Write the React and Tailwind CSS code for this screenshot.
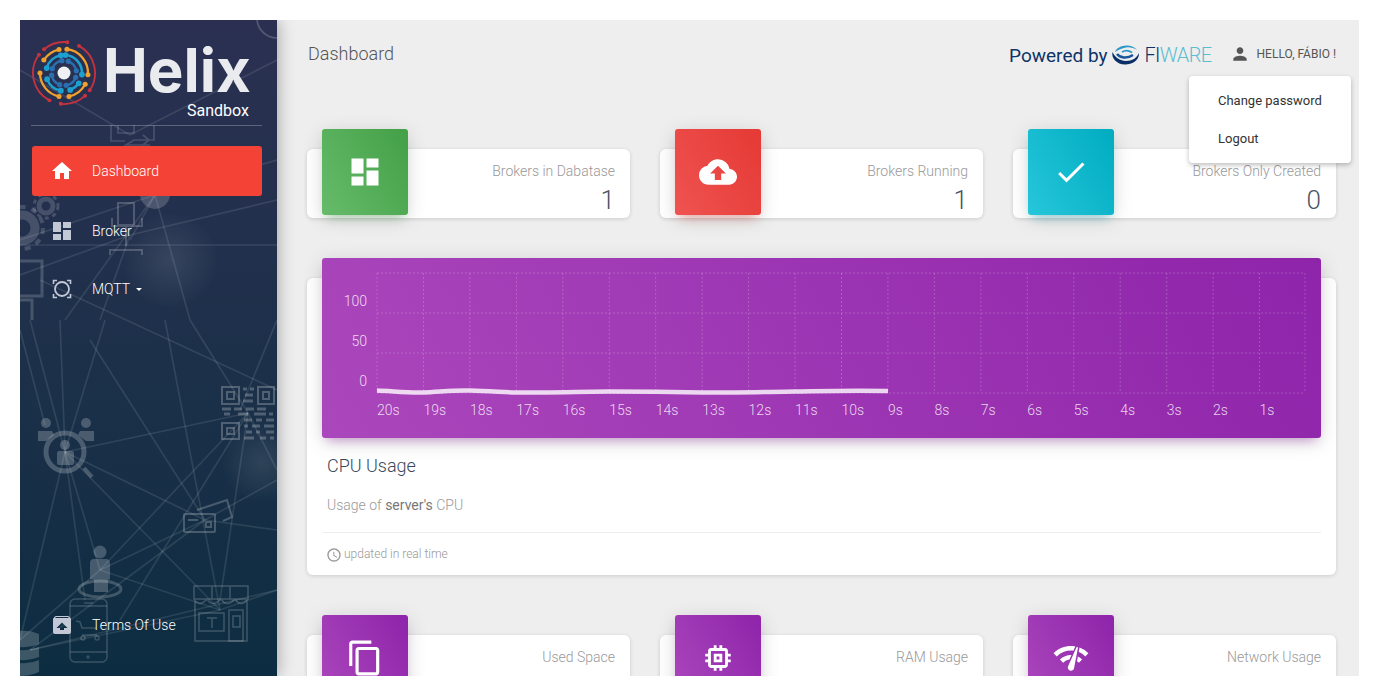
import React from "react";
import {
  MdHome,
  MdDashboard,
  MdCloudUpload,
  MdCheck,
  MdPerson,
  MdContentCopy,
  MdMemory,
  MdNetworkCheck,
  MdAccessTime,
  MdUnarchive,
} from "react-icons/md";

const topStats = [
  { title: "Brokers in Dabatase", value: "1", Icon: MdDashboard, size: 36, color: "bg-[linear-gradient(60deg,#66bb6a,#43a047)] shadow-[0_4px_20px_rgba(0,0,0,.14),0_7px_10px_-5px_rgba(76,175,80,.4)]" },
  { title: "Brokers Running", value: "1", Icon: MdCloudUpload, size: 38, color: "bg-[linear-gradient(60deg,#ef5350,#e53935)] shadow-[0_4px_20px_rgba(0,0,0,.14),0_7px_10px_-5px_rgba(244,67,54,.4)]" },
  { title: "Brokers Only Created", value: "0", Icon: MdCheck, size: 36, color: "bg-[linear-gradient(60deg,#26c6da,#00acc1)] shadow-[0_4px_20px_rgba(0,0,0,.14),0_7px_10px_-5px_rgba(0,172,193,.4)]" },
];

const purple = "bg-[linear-gradient(60deg,#ab47bc,#8e24aa)] shadow-[0_4px_20px_rgba(0,0,0,.14),0_7px_10px_-5px_rgba(156,39,176,.4)]";

const bottomStats = [
  { title: "Used Space", value: "", Icon: MdContentCopy, size: 38, color: purple },
  { title: "RAM Usage", value: "", Icon: MdMemory, size: 34, color: purple },
  { title: "Network Usage", value: "", Icon: MdNetworkCheck, size: 38, color: purple },
];

const seconds = ["20s", "19s", "18s", "17s", "16s", "15s", "14s", "13s", "12s", "11s", "10s", "9s", "8s", "7s", "6s", "5s", "4s", "3s", "2s", "1s"];

function StatCard({ title, value, Icon, size, color }) {
  return (
    <div className="mt-5 flex h-[69px] justify-between rounded-md bg-white shadow-[0_1px_4px_rgba(0,0,0,.14)]">
      <div className={`-mt-5 ml-[15px] flex h-[86px] w-[86px] shrink-0 items-center justify-center rounded-[3px] text-white ${color}`}>
        <Icon size={size} />
      </div>
      <div className="pr-[15px] pt-[12px] text-right">
        <p className="text-[14px] leading-[21px] font-light text-[#999]">{title}</p>
        <p className="mt-[3px] text-[26px] leading-[31px] font-light text-[#4a5463]">{value}</p>
      </div>
    </div>
  );
}

function CpuChart() {
  const xs = seconds.map((_, i) => 55 + i * 46.45);
  return (
    <svg viewBox="0 0 999 180" className="block h-[180px] w-[999px]">
      {[15, 55, 95, 135].map((y) => (
        <line key={y} x1="55" x2="983" y1={y} y2={y} stroke="rgba(255,255,255,.2)" strokeDasharray="2 2" />
      ))}
      {xs.concat(983).map((x) => (
        <line key={x} x1={x} x2={x} y1="15" y2="135" stroke="rgba(255,255,255,.2)" strokeDasharray="2 2" />
      ))}
      {[["100", 48], ["50", 88], ["0", 128]].map(([t, y]) => (
        <text key={t} x="45" y={y} textAnchor="end" fontSize="14" fontWeight="300" fill="rgba(255,255,255,.8)">{t}</text>
      ))}
      {seconds.map((s, i) => (
        <text key={s} x={xs[i]} y="157" fontSize="14" fontWeight="300" fill="rgba(255,255,255,.8)">{s}</text>
      ))}
      <path
        d="M55 132.5C70 133 85 135 101 134.5S130 132 148 132.5 180 134 194 134.5 270 133.5 287 133.5 360 134 380 134.5 440 134 473 133.5 520 132.5 566 133 566 133"
        fill="none"
        stroke="rgba(255,255,255,.8)"
        strokeWidth="4.5"
      />
    </svg>
  );
}

function SidebarArt() {
  const hub = [
    [65, 452, 30, 320], [65, 452, 60, 320], [65, 452, 105, 320], [65, 452, 248, 413], [65, 452, 205, 520],
    [65, 452, 100, 570], [65, 452, 220, 610], [65, 452, 20, 640], [65, 452, 85, 600], [248, 413, 100, 570],
    [248, 413, 120, 620], [248, 413, 220, 600], [248, 413, 190, 320], [248, 413, 277, 470], [205, 520, 100, 570],
    [205, 520, 277, 530], [205, 520, 277, 480], [205, 520, 30, 650], [100, 570, 220, 610], [100, 570, 20, 640],
    [220, 610, 277, 590], [30, 650, 220, 610], [30, 650, 277, 590], [220, 610, 165, 320], [277, 320, 240, 410],
    [155, 195, 20, 240], [155, 195, 277, 160], [155, 195, 130, 240], [155, 195, 65, 320],
    [130, 235, 20, 275], [130, 235, 277, 200], [130, 235, 100, 320], [155, 195, 190, 320],
    [20, 245, 277, 245], [40, 280, 277, 390], [130, 135, 20, 70], [130, 135, 277, 60],
    [20, 330, 45, 425], [205, 520, 90, 340],
  ];
  return (
    <svg viewBox="20 20 257 656" className="absolute inset-0 h-full w-full blur-[0.4px]" fill="none" stroke="rgba(255,255,255,.1)" strokeWidth="1.7">
      <defs>
        <radialGradient id="glow">
          <stop offset="0" stopColor="rgba(255,255,255,.1)" />
          <stop offset="1" stopColor="rgba(255,255,255,0)" />
        </radialGradient>
      </defs>
      <circle cx="170" cy="260" r="50" fill="url(#glow)" stroke="none" />
      <circle cx="262" cy="462" r="42" fill="url(#glow)" stroke="none" />
      {hub.map(([a, b, c, d], i) => (
        <line key={i} x1={a} y1={b} x2={c} y2={d} />
      ))}
      <circle cx="277" cy="18" r="20" stroke="rgba(255,255,255,.2)" />
      {/* flow chart */}
      <g stroke="rgba(255,255,255,.16)">
        <path d="M111 125v16h14M154 125v15h-20l-8 5h24M118 125v8h16v-8M143 135l6 5-6 5" />
      </g>
      {/* gears */}
      <g stroke="rgba(255,255,255,.16)">
        <circle cx="46" cy="206" r="7" strokeWidth="5" />
        <circle cx="46" cy="206" r="12" strokeDasharray="4 4" strokeWidth="3" />
        <circle cx="22" cy="228" r="13" strokeWidth="9" />
        <circle cx="22" cy="228" r="21" strokeDasharray="6 6" strokeWidth="4" />
      </g>
      <circle cx="155" cy="194" r="15" fill="rgba(255,255,255,.18)" stroke="none" />
      {/* chair */}
      <g stroke="rgba(255,255,255,.2)" strokeWidth="2">
        <path d="M118 203h16v22h-16zM112 218v8h30v-8M126 226v20M110 255v-5h32v5" />
      </g>
      {/* monitor */}
      <g stroke="rgba(255,255,255,.18)" strokeWidth="3">
        <path d="M20 261h22v35H20M20 300h12v20" />
      </g>
      {/* qr */}
      <g stroke="rgba(255,255,255,.24)">
        <path d="M222 387h17v17h-17zM227 392h7v7h-7zM258 387h16v17h-16zM263 392h6v7h-6zM222 423h17v16h-17zM227 428h7v6h-7z" strokeWidth="2" />
        <path d="M243 389h4m3 0h4M245 395h8M243 401h10M222 409h9m3 0h8m4 0h8m3 0h9M224 414h6m8 0h10m6 0h12m3 0h4M244 420h8m4 0h6m4 0h8M244 426h4m4 0h8m4 0h10M246 432h6m4 0h4m6 0h8M244 438h10m6 0h6m4 0h4" strokeWidth="3" />
      </g>
      {/* magnifier and people */}
      <g stroke="rgba(255,255,255,.22)">
        <circle cx="65" cy="452" r="19" strokeWidth="5" />
        <path d="M84 468l8 9" strokeWidth="4" />
        <g fill="rgba(255,255,255,.22)" stroke="none">
          <circle cx="65" cy="445" r="5" />
          <rect x="57" y="451" width="17" height="14" rx="2" />
          <circle cx="46" cy="423" r="5" />
          <path d="M38 431h14l2 4-8 6h-8z" />
          <circle cx="86" cy="423" r="5" />
          <path d="M80 431h14v10h-8l-8-6z" />
        </g>
      </g>
      {/* cards */}
      <g stroke="rgba(255,255,255,.22)" strokeWidth="2">
        <path d="M197 510l30-10 5 17-9 4" />
        <rect x="184" y="514" width="31" height="18" rx="1" />
        <path d="M188 520h10M206 522h5v5h-5z" />
      </g>
      {/* person on ring */}
      <g fill="rgba(255,255,255,.22)" stroke="none">
        <circle cx="100" cy="552" r="6.5" />
        <path d="M90 563q0-4 4-4h12q4 0 4 4v16l-2 1v12H94v-12l-4-1z" />
      </g>
      <ellipse cx="100" cy="589" rx="21" ry="8" stroke="rgba(255,255,255,.2)" strokeWidth="3" />
      {/* phone */}
      <g stroke="rgba(255,255,255,.18)" strokeWidth="1.5">
        <rect x="70" y="599" width="37" height="63" rx="5" />
        <path d="M70 606h37M70 652h37M84 603h9M96 628h-14l-2-6-4-1M82 635h15" />
        <circle cx="83" cy="638" r="2" />
        <circle cx="97" cy="638" r="2" />
        <circle cx="88" cy="657" r="1" />
      </g>
      {/* store */}
      <g stroke="rgba(255,255,255,.2)" strokeWidth="1.5">
        <path d="M194 586h54v13H194zM195 600v41h52v-41M194 599q5 9 13 0 5 9 14 0 6 9 14 0 6 9 13 0M212 586v13M230 586v13" />
        <rect x="199" y="613" width="25" height="18" />
        <rect x="229" y="610" width="14" height="31" />
        <path d="M207 618h10M212 618v10M233 616h7v11h-7z" />
      </g>
      {/* db */}
      <g fill="rgba(255,255,255,.2)" stroke="none">
        <path d="M20 631q10-1 19 3v10q-9 4-19 3zM20 650q10 1 19-3v10q-9 4-19 3zM20 663q10 1 19-3v12q-9 4-19 4z" />
      </g>
    </svg>
  );
}

function Arc({ r, from, to, color, width }) {
  const pt = (deg) => {
    const a = (deg * Math.PI) / 180;
    return [33 + r * Math.sin(a), 33 - r * Math.cos(a)];
  };
  const [x1, y1] = pt(from);
  const [x2, y2] = pt(to);
  const large = to - from > 180 ? 1 : 0;
  return (
    <g>
      <path d={`M${x1} ${y1}A${r} ${r} 0 ${large} 1 ${x2} ${y2}`} stroke={color} strokeWidth={width} fill="none" />
      <circle cx={x1} cy={y1} r={width * 1.1} fill={color} />
      <circle cx={x2} cy={y2} r={width * 1.1} fill={color} />
    </g>
  );
}

const helixArcs = [
  [31, -40, 6, "#c8323f", 1.8], [31, 29, 124, "#c8323f", 1.8], [31, 137, 186, "#c8323f", 1.8], [31, 208, 306, "#c8323f", 1.8],
  [24, -57, -12, "#f0a02c", 2.3], [24, 7, 94, "#f0a02c", 2.3], [24, 118, 168, "#f0a02c", 2.3], [24, 192, 270, "#f0a02c", 2.3],
  [18, -74, -10, "#1ca0d0", 2.6], [18, 5, 95, "#1ca0d0", 2.6], [18, 125, 160, "#1ca0d0", 2.6], [18, 190, 250, "#1ca0d0", 2.6],
  [12.5, 20, 80, "#2a70b0", 2.4], [12.5, 110, 170, "#2a70b0", 2.4], [12.5, 200, 260, "#2a70b0", 2.4], [12.5, 290, 350, "#2a70b0", 2.4],
];

function HelixMark() {
  return (
    <svg viewBox="0 0 66 66" className="h-[66px] w-[66px] shrink-0">
      {helixArcs.map(([r, from, to, color, width], i) => (
        <Arc key={i} r={r} from={from} to={to} color={color} width={width} />
      ))}
      <circle cx="33" cy="33" r="6.5" fill="#eef0f4" />
    </svg>
  );
}

function FiwareSwirl() {
  return (
    <svg viewBox="0 0 29 20" className="mx-1 h-[20px] w-[29px]" fill="none">
      <path d="M1.5 7C0 13 6 20 15 19.500S28.500 13 28 8c-2 5-7 8-13 8S4 12.500 1.500 7z" fill="#0a2f66" />
      <path d="M4 7c1-4 7-7 13-6.500 4 .3 7 2 9 4.500-3-2-7-3-11-2.500S7 5 4 7z" fill="#2c97c9" />
      <path d="M6 9c3 4 10 5 16 1" stroke="#17579a" strokeWidth="2.4" />
      <path d="M11 7c3-2 7-1.500 10 .5" stroke="#2c97c9" strokeWidth="1.8" />
    </svg>
  );
}

function MqttIcon({ size, className }) {
  return (
    <svg viewBox="0 0 24 24" width={size} height={size} className={className} fill="none" stroke="currentColor">
      <circle cx="12" cy="12" r="7" strokeWidth="1.8" />
      <path d="M3.500 7V3.500H7M17 3.500h3.500V7M20.500 17v3.500H17M7 20.500H3.500V17" strokeWidth="1.6" />
    </svg>
  );
}

function NavItem({ Icon, label, active, caret, className = "" }) {
  return (
    <div className={`flex h-[50px] items-center rounded-[3px] pl-[18px] text-[14px] font-light text-white ${active ? "bg-[#f44336]" : ""} ${className}`}>
      <Icon size={24} className={active ? "text-white" : "text-[#c3c8d6]"} />
      <span className="ml-[18px]">{label}</span>
      {caret && <span className="ml-[6px] h-0 w-0 border-x-[3.5px] border-t-[3.5px] border-x-transparent border-t-white" />}
    </div>
  );
}

export default function App() {
  return (
    <div className="min-h-[697px] bg-white p-5 pr-[21px] font-['Roboto',sans-serif]">
      <div className="flex h-[656px] overflow-hidden bg-[#eeeeee]">
        <aside className="relative z-10 flex w-[257px] shrink-0 flex-col bg-gradient-to-b from-[#2b3052] via-[#1d304a] via-50% to-[#0c2d41] shadow-[0_0_16px_rgba(0,0,0,.35)]">
          <SidebarArt />
          <div className="relative ml-[11px] mr-[15px] h-[106px] border-b border-white/25 pt-[20px]">
            <div className="flex items-start">
              <HelixMark />
              <span className="mt-[5px] ml-[6px] font-['Inter',sans-serif] text-[60px] leading-[50px] font-bold text-[#e9ebef]">Helix</span>
            </div>
            <p className="mt-[-7px] pr-[13px] text-right text-[16px] leading-[24px] text-white">Sandbox</p>
          </div>
          <nav className="relative ml-3 mr-[15px] mt-5 flex flex-1 flex-col">
            <NavItem Icon={MdHome} label="Dashboard" active />
            <NavItem Icon={MdDashboard} label="Broker" className="mt-[10px]" />
            <NavItem Icon={MqttIcon} label="MQTT" caret className="mt-[8px]" />
            <NavItem Icon={MdUnarchive} label="Terms Of Use" className="mt-auto mb-[26px]" />
          </nav>
        </aside>

        <main className="relative min-w-0 flex-1 pl-[30px] pr-[23px]">
          <header className="flex h-[67px] items-center justify-between pl-px">
            <h1 className="text-[18px] font-light text-[#555]">Dashboard</h1>
            <div className="flex items-center">
              <div className="flex items-center pt-[3px] leading-none text-[#0f3468]">
                <span className="text-[19px]">Powered by</span>
                <FiwareSwirl />
                <span className="text-[20px] font-light tracking-[-0.6px]">FI<span className="text-[#5cbcd0]">WARE</span></span>
              </div>
              <MdPerson size={20} className="ml-[18px] text-[#555]" />
              <span className="ml-[7px] text-[12px] text-[#555]">HELLO, FÁBIO !</span>
            </div>
          </header>

          <div className="absolute top-[56px] right-2 z-20 w-[162px] rounded bg-white pt-[6px] pb-[5px] text-[13px] text-[#333] shadow-[0_2px_5px_rgba(0,0,0,.26)]">
            <p className="flex h-[38px] items-center pl-[29px]">Change password</p>
            <p className="flex h-[38px] items-center pl-[29px]">Logout</p>
          </div>

          <section className="mt-[42px] grid grid-cols-3 gap-[30px]">
            {topStats.map((s) => (
              <StatCard key={s.title} {...s} />
            ))}
          </section>

          <section className="mt-[60px] flex h-[297px] flex-col rounded-md bg-white shadow-[0_1px_4px_rgba(0,0,0,.14)]">
            <div className="mx-[15px] -mt-5 rounded-[3px] bg-[linear-gradient(60deg,#ab47bc,#8e24aa)] shadow-[0_4px_20px_rgba(0,0,0,.14),0_7px_10px_-5px_rgba(156,39,176,.4)]">
              <CpuChart />
            </div>
            <div className="px-5 pt-[14px]">
              <h2 className="text-[18px] leading-[27px] font-light text-[#3c4858]">CPU Usage</h2>
              <p className="mt-[16px] text-[14px] leading-[21px] font-light text-[#999]">
                Usage of <span className="font-normal text-[#777]">server's</span> CPU
              </p>
            </div>
            <div className="mx-[15px] mt-[16px] flex h-[43px] items-center border-t border-[#eee] pl-[4px] text-[12px] font-light text-[#999]">
              <MdAccessTime size={16} className="mr-[2px] mt-[2px]" />
              updated in real time
            </div>
          </section>

          <section className="mt-[40px] grid grid-cols-3 gap-[30px]">
            {bottomStats.map((s) => (
              <StatCard key={s.title} {...s} />
            ))}
          </section>
        </main>
      </div>
    </div>
  );
}
